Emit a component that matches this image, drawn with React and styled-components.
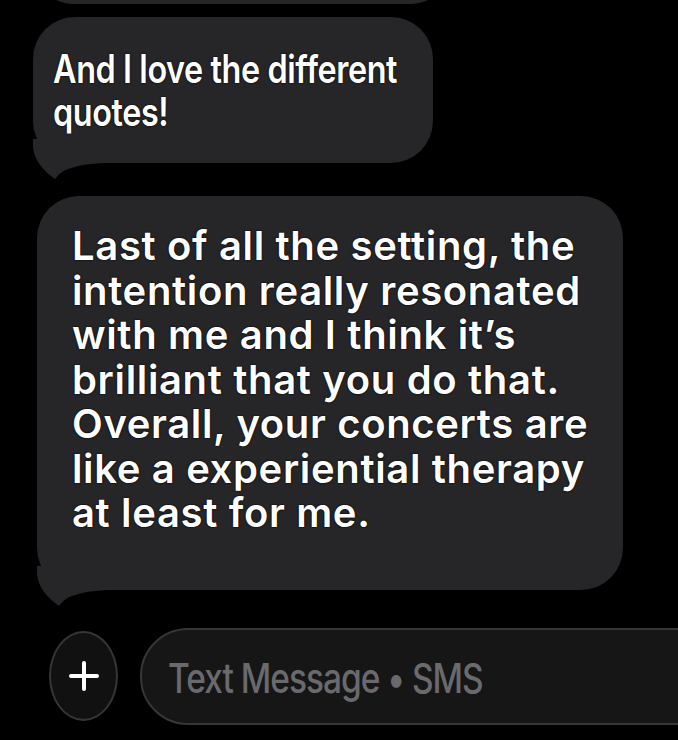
import styled, { createGlobalStyle } from "styled-components";

const GlobalStyle = createGlobalStyle`
  html, body {
    margin: 0;
    padding: 0;
    background: #000;
  }
`;

const BUBBLE = "#262629";

const Screen = styled.div`
  width: 678px;
  height: 740px;
  overflow: hidden;
  background: #000;
  display: flex;
  flex-direction: column;
  font-family: "Inter", "Liberation Sans", sans-serif;

  & > * {
    flex: none;
  }
`;

const Bubble = styled.div`
  position: relative;
  box-sizing: border-box;
  margin-left: ${(p) => p.$left}px;
  margin-top: ${(p) => p.$top}px;
  width: ${(p) => p.$width}px;
  height: ${(p) => (p.$height ? `${p.$height}px` : "auto")};
  padding: ${(p) => p.$pad || "0"};
  background: ${BUBBLE};
  border-radius: 42px;
  color: #fff;
  font-size: ${(p) => p.$size || 38}px;
  line-height: ${(p) => p.$lh || 44}px;
  letter-spacing: ${(p) => p.$ls || 0}px;
  font-weight: 600;
  white-space: nowrap;
  text-shadow: 0 0 2px #000, 0 0 1px #000;
`;

const Line = styled.div`
  height: ${(p) => p.$lh}px;
  transform: ${(p) => (p.$scale ? `scaleX(${p.$scale})` : "none")};
  transform-origin: left center;
`;

const TailSvg = styled.svg`
  position: absolute;
  left: 0;
  bottom: -16px;
  width: 70px;
  height: 40px;
`;

const Tail = () => (
  <TailSvg viewBox="0 0 70 40">
    <path
      d="M0 0 L0 8 C1 22 12 33 22 40 C25 36 29 32 35 30 C44 27 52 25 70 24 L70 0 Z"
      fill={BUBBLE}
    />
  </TailSvg>
);

const Composer = styled.div`
  display: flex;
  align-items: center;
  margin-top: 38px;
  margin-left: 49px;
  gap: 22px;
`;

const PlusButton = styled.div`
  box-sizing: border-box;
  flex: none;
  width: 69px;
  height: 90px;
  border-radius: 50%;
  border: 2px solid #363638;
  background: #111112;
  display: flex;
  align-items: center;
  justify-content: center;
`;

const Field = styled.div`
  box-sizing: border-box;
  flex: none;
  width: 600px;
  height: 97px;
  border-radius: 48px;
  border: 2px solid #363638;
  background: #161617;
  display: flex;
  align-items: center;
  padding-left: 26px;
  padding-top: 4px;
`;

const Placeholder = styled.span`
  display: inline-block;
  color: #6a6a6e;
  font-size: 41px;
  font-weight: 500;
  letter-spacing: -1.2px;
  white-space: nowrap;
  transform: scaleX(0.815);
  transform-origin: left center;
`;

const firstLines = ["And I love the different", "quotes!"];

const secondLines = [
  "Last of all the setting, the",
  "intention really resonated",
  "with me and I think it’s",
  "brilliant that you do that.",
  "Overall, your concerts are",
  "like a experiential therapy",
  "at least for me.",
];

export default function App() {
  return (
    <>
      <GlobalStyle />
      <Screen>
        <Bubble $left={40} $top={-60} $width={404} $height={64} />

        <Bubble
          $left={33}
          $top={13}
          $width={400}
          $pad="30px 20px 30px 20px"
          $size={39}
          $lh={43}
          $ls={-0.5}
        >
          {firstLines.map((t) => (
            <Line key={t} $lh={43} $scale={0.83}>
              {t}
            </Line>
          ))}
          <Tail />
        </Bubble>

        <Bubble
          $left={37}
          $top={33}
          $width={586}
          $pad="28px 20px 54px 35px"
          $size={40}
          $lh={44.5}
          $ls={0.65}
        >
          {secondLines.map((t) => (
            <Line key={t} $lh={44.5}>
              {t}
            </Line>
          ))}
          <Tail />
        </Bubble>

        <Composer>
          <PlusButton>
            <svg width="30" height="30" viewBox="0 0 30 30">
              <path
                d="M15 2 V28 M2 15 H28"
                stroke="#fff"
                strokeWidth="4"
                strokeLinecap="round"
              />
            </svg>
          </PlusButton>
          <Field>
            <Placeholder>Text Message • SMS</Placeholder>
          </Field>
        </Composer>
      </Screen>
    </>
  );
}
